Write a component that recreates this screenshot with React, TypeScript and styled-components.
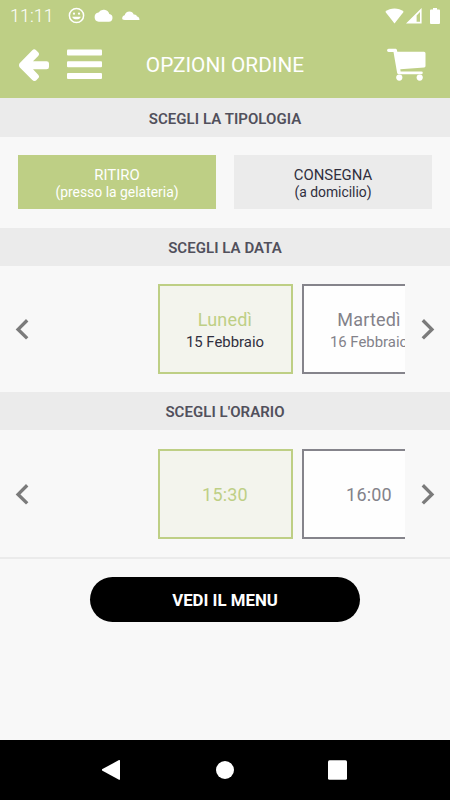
import React from "react";
import styled, { createGlobalStyle } from "styled-components";

const GREEN = "#becf85";

const GlobalStyle = createGlobalStyle`
  * { box-sizing: border-box; }
  body { margin: 0; background: #f8f8f8; font-family: Roboto, "Liberation Sans", sans-serif; }
  button { font-family: inherit; margin: 0; padding: 0; border: 0; background: none; }
  svg { display: block; flex: none; }
`;

const Screen = styled.div`
  width: 450px;
  height: 800px;
  display: flex;
  flex-direction: column;
  overflow: hidden;
  background: #f8f8f8;
`;

const Header = styled.header`
  height: 98px;
  flex: none;
  background: ${GREEN};
  color: #fff;
`;

const StatusBar = styled.div`
  height: 31px;
  display: flex;
  align-items: center;
  justify-content: space-between;
  padding: 0 10px;
`;

const StatusGroup = styled.div<{ $gap: number }>`
  display: flex;
  align-items: center;
  gap: ${(p) => p.$gap}px;
`;

const Clock = styled.span`
  width: 49px;
  font-size: 18px;
  line-height: 20px;
  font-weight: 350;
`;

const TitleBar = styled.div`
  height: 67px;
  display: grid;
  grid-template-columns: 120px 1fr 120px;
  align-items: center;
`;

const NavIcons = styled.div`
  display: flex;
  align-items: center;
  gap: 18px;
  padding-left: 19px;
`;

const Title = styled.h1`
  margin: 0;
  text-align: center;
  font-size: 20.8px;
  line-height: 24px;
  font-weight: 400;
  white-space: nowrap;
`;

const CartSlot = styled.button`
  display: flex;
  justify-content: flex-end;
  padding-right: 24px;
`;

const SectionTitle = styled.h2<{ $height: number }>`
  margin: 0;
  height: ${(p) => p.$height}px;
  flex: none;
  display: flex;
  align-items: center;
  justify-content: center;
  padding-top: 2px;
  background: #ebebeb;
  color: #51505c;
  font-size: 15px;
  font-weight: 600;
  letter-spacing: 0.05px;
`;

const TypeRow = styled.div`
  height: 91px;
  flex: none;
  padding: 18px;
  display: grid;
  grid-template-columns: 1fr 1fr;
  gap: 18px;
`;

const TypeButton = styled.button<{ $active?: boolean }>`
  height: 54px;
  display: flex;
  flex-direction: column;
  align-items: center;
  justify-content: center;
  padding-top: 3px;
  background: ${(p) => (p.$active ? GREEN : "#ebebeb")};
  color: ${(p) => (p.$active ? "#fff" : "#302f3e")};
`;

const TypeName = styled.span`
  font-size: 14.9px;
  line-height: 17px;
`;

const TypeNote = styled.span`
  font-size: 13.9px;
  line-height: 17px;
`;

const Carousel = styled.div<{ $height: number }>`
  height: ${(p) => p.$height}px;
  flex: none;
  display: grid;
  grid-template-columns: 45px 360px 45px;
  align-items: center;
  justify-items: center;
`;

const Track = styled.div`
  width: 360px;
  display: flex;
  gap: 9px;
  padding-left: 112.5px;
  overflow: hidden;
`;

const Card = styled.button<{ $active?: boolean }>`
  width: 135px;
  height: 90px;
  flex: none;
  display: flex;
  flex-direction: column;
  align-items: center;
  justify-content: center;
  padding-top: 2px;
  border: 2px solid ${(p) => (p.$active ? GREEN : "#85848b")};
  background: ${(p) => (p.$active ? "#f3f4ed" : "#fefefe")};
  color: ${(p) => (p.$active ? GREEN : "#83828a")};
`;

const CardMain = styled.span`
  font-size: 18px;
  line-height: 23px;
  letter-spacing: 0.2px;
`;

const CardSub = styled.span<{ $active?: boolean }>`
  font-size: 14.9px;
  line-height: 22px;
  color: ${(p) => (p.$active ? "#302f3e" : "#83828a")};
`;

const Footer = styled.div`
  flex: 1;
  border-top: 2px solid #ebebeb;
  padding-top: 18px;
  display: flex;
  justify-content: center;
  align-items: flex-start;
`;

const MenuButton = styled.button`
  width: 270px;
  height: 45px;
  border-radius: 23px;
  padding-top: 1px;
  background: #000;
  color: #fff;
  font-size: 16.8px;
  font-weight: 700;
`;

const SystemNav = styled.nav`
  height: 60px;
  flex: none;
  background: #000;
  display: grid;
  grid-template-columns: repeat(3, 113px);
  justify-content: center;
  align-items: center;
  justify-items: center;
`;

const SmileIcon = () => (
  <svg width="17" height="17" viewBox="0 0 17 17" fill="none" stroke="#fff">
    <circle cx="8.5" cy="8.5" r="7.1" strokeWidth="1.5" />
    <circle cx="6" cy="6.7" r="1.1" fill="#fff" stroke="none" />
    <circle cx="11" cy="6.7" r="1.1" fill="#fff" stroke="none" />
    <path d="M4.2 9.7h8.6a4.5 3.7 0 0 1-8.6 0z" fill="#fff" stroke="none" />
  </svg>
);

const CloudIcon = () => (
  <svg width="19" height="13" viewBox="0 0 19 13" fill="#fff">
    <path d="M15.3 4.9A6 6 0 0 0 4.5 3.5 4.7 4.7 0 0 0 4.8 12.8h10.1a4 4 0 0 0 .4-7.9z" />
  </svg>
);

const SmallCloudIcon = () => (
  <svg width="18" height="10" viewBox="0 0 18 10" fill="#fff">
    <path d="M3 9C.5 9 .2 8.300.2 7.300.2 5.500 1.500 4.500 2.700 4.300 3.200 2 5 .4 7.500.4c2 0 3.600 1.200 4.200 3.100 1.800-.2 3 .6 3.300 2.100 1.500.2 2.500 1.500 2.500 3.400z" />
  </svg>
);

const WifiIcon = () => (
  <svg width="19" height="16" viewBox="0 0 19 16" fill="#fff">
    <path d="M9.5 15.6.3 3.8C5.5-.5 13.5-.5 18.7 3.8z" />
  </svg>
);

const SignalIcon = () => (
  <svg width="16" height="16" viewBox="0 0 16 16" fill="#fff" fillRule="evenodd">
    <path d="M0 15.6 15.6 0v15.6zM10.6 7.400v6.400h3.400V4z" />
  </svg>
);

const BatteryIcon = () => (
  <svg width="10" height="16" viewBox="0 0 10 16" fill="#fff">
    <path d="M3 0h4v1.5h2a1 1 0 0 1 1 1V15a1 1 0 0 1-1 1H1a1 1 0 0 1-1-1V2.500a1 1 0 0 1 1-1h2z" />
  </svg>
);

const BackIcon = () => (
  <svg width="30" height="32" viewBox="0 0 30 32" fill="#fff">
    <path d="M.6 14.300 13.300 1.200q1.900-1.900 3.800 0l2.100 2.100q1.700 1.800 0 3.600L14 12.300H27.500q2.500 0 2.500 2.300v3.300q0 2.400-2.500 2.400H14l5.200 5.400q1.700 1.800 0 3.600l-2.100 2.100q-1.900 1.500-3.800-.3L.6 18.200q-1.200-2 0-3.900z" />
  </svg>
);

const HamburgerIcon = () => (
  <svg width="35" height="31" viewBox="0 0 35 31" fill="#fff">
    <rect y=".5" width="35" height="6" rx="1" />
    <rect y="12.300" width="35" height="6" rx="1" />
    <rect y="24" width="35" height="6" rx="1" />
  </svg>
);

const CartIcon = () => (
  <svg width="39" height="33" viewBox="0 0 39 33" fill="#fff">
    <path d="M1.600.8h7q1 0 1.300 1.300L10.300 3.800H37q1.500 0 1.500 1.500v12.700q0 1.200-1.300 1.400L13.300 21.200l.3 2.200h20.900q1.300 0 1.300 1.400t-1.300 1.400H11.500q-1.200 0-1.400-1.400L6.500 3.900H1.600a1.550 1.550 0 0 1 0-3.100z" />
    <circle cx="12.300" cy="29.600" r="3.100" />
    <circle cx="32.700" cy="29.600" r="3.100" />
  </svg>
);

const ChevronIcon = ({ direction }: { direction: "left" | "right" }) => (
  <svg width="15" height="22" viewBox="0 0 15 22" fill="none" stroke="#7b7b7b" strokeWidth="3.400">
    <path d={direction === "left" ? "M12.200 2.300 3.100 11.400l9.100 9" : "M2.800 2.300l9.100 9.100-9.100 9"} />
  </svg>
);

type Item = { main: string; sub?: string };

const days: Item[] = [
  { main: "Lunedì", sub: "15 Febbraio" },
  { main: "Martedì", sub: "16 Febbraio" },
];

const times: Item[] = [{ main: "15:30" }, { main: "16:00" }];

const Picker = ({ items, height }: { items: Item[]; height: number }) => (
  <Carousel $height={height}>
    <ChevronIcon direction="left" />
    <Track>
      {items.map((item, i) => (
        <Card key={item.main} $active={i === 0}>
          <CardMain>{item.main}</CardMain>
          {item.sub && <CardSub $active={i === 0}>{item.sub}</CardSub>}
        </Card>
      ))}
    </Track>
    <ChevronIcon direction="right" />
  </Carousel>
);

export default function App() {
  return (
    <Screen>
      <GlobalStyle />
      <Header>
        <StatusBar>
          <StatusGroup $gap={9}>
            <Clock>11:11</Clock>
            <SmileIcon />
            <CloudIcon />
            <SmallCloudIcon />
          </StatusGroup>
          <StatusGroup $gap={2}>
            <WifiIcon />
            <StatusGroup $gap={8}>
              <SignalIcon />
              <BatteryIcon />
            </StatusGroup>
          </StatusGroup>
        </StatusBar>
        <TitleBar>
          <NavIcons>
            <BackIcon />
            <HamburgerIcon />
          </NavIcons>
          <Title>OPZIONI ORDINE</Title>
          <CartSlot>
            <CartIcon />
          </CartSlot>
        </TitleBar>
      </Header>
      <SectionTitle $height={39}>SCEGLI LA TIPOLOGIA</SectionTitle>
      <TypeRow>
        <TypeButton $active>
          <TypeName>RITIRO</TypeName>
          <TypeNote>(presso la gelateria)</TypeNote>
        </TypeButton>
        <TypeButton>
          <TypeName>CONSEGNA</TypeName>
          <TypeNote>(a domicilio)</TypeNote>
        </TypeButton>
      </TypeRow>
      <SectionTitle $height={38}>SCEGLI LA DATA</SectionTitle>
      <Picker items={days} height={126} />
      <SectionTitle $height={38}>SCEGLI L'ORARIO</SectionTitle>
      <Picker items={times} height={127} />
      <Footer>
        <MenuButton>VEDI IL MENU</MenuButton>
      </Footer>
      <SystemNav>
        <svg width="20" height="20" viewBox="0 0 20 20" fill="#fff">
          <path d="M0 9.300 17 .1q1-.3 1 .6v18.500q0 .9-1 .5L0 10.600z" />
        </svg>
        <svg width="18" height="18" viewBox="0 0 18 18" fill="#fff">
          <circle cx="9" cy="9" r="9" />
        </svg>
        <svg width="21" height="20" viewBox="0 0 21 20" fill="#fff">
          <rect y=".3" width="19" height="19.400" rx="1.500" />
        </svg>
      </SystemNav>
    </Screen>
  );
}
